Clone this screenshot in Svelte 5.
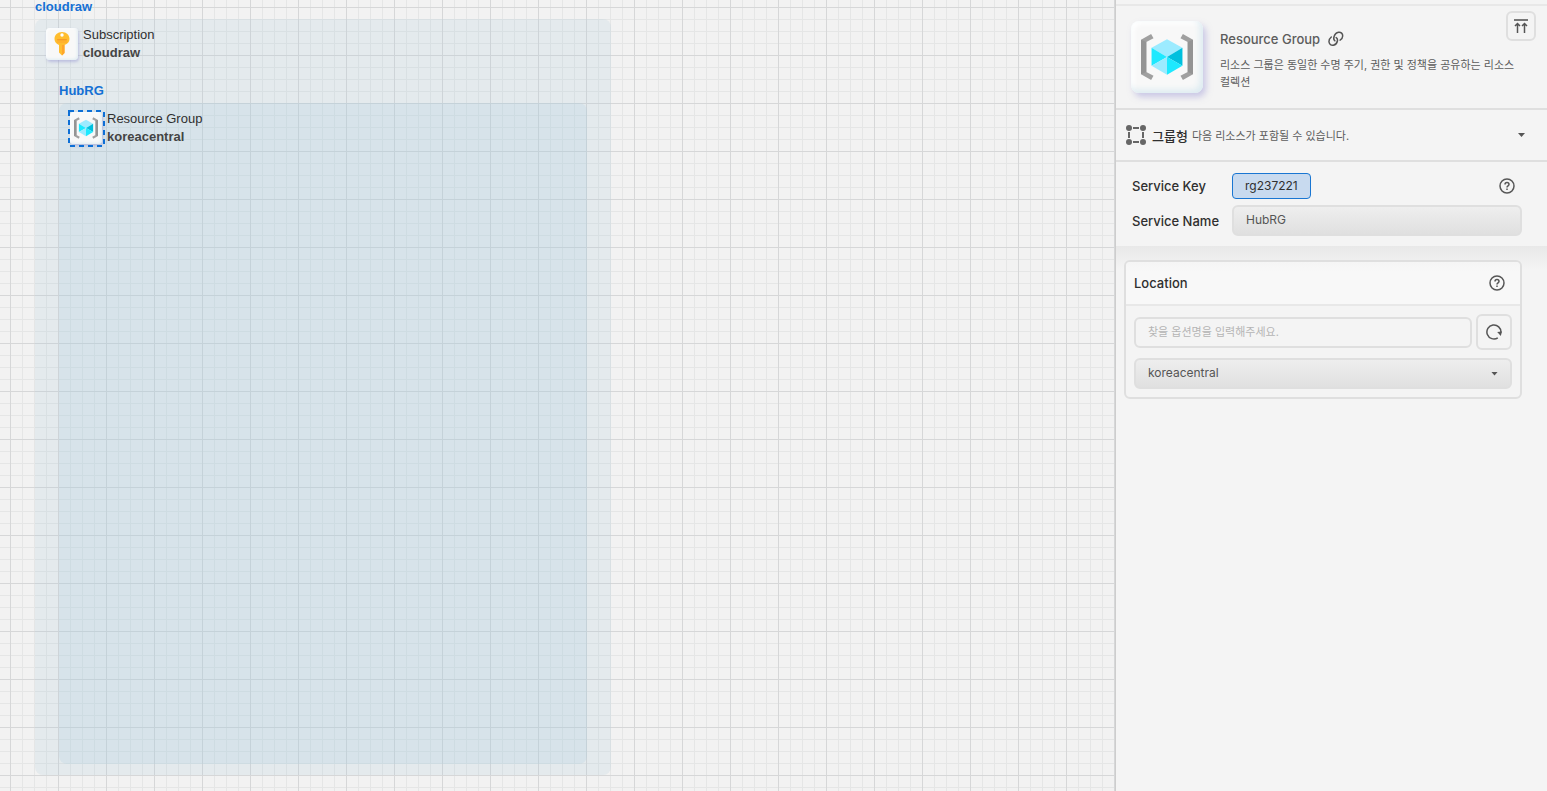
<script>
  let locationName = $state('koreacentral');
  let serviceName = $state('HubRG');
  let query = $state('');
</script>

{#snippet groupIcon(size)}
  <svg width={size} height={size} viewBox="0 0 54 50" aria-hidden="true">
    <path d="M10.5 1 13 5.5 5.5 9.5V40.5L13 44.500 10.500 49 0 43V7Z" fill="#a0a0a0" />
    <path d="M43.500 1 41 5.500 48.500 9.500V40.500L41 44.500 43.500 49 54 43V7Z" fill="#a0a0a0" />
    <path d="M0 7 5.500 9.500V40.500L0 43Z" fill="#949494" />
    <path d="M54 7 48.500 9.500V40.500L54 43Z" fill="#949494" />
    <path d="M27 6.500 43 15.500 27 25 11 15.500Z" fill="#9cebff" />
    <path d="M11 15.500 27 25 11 34Z" fill="#1de9ff" />
    <path d="M11 34 27 25V43.500Z" fill="#9cebff" />
    <path d="M43 15.500V34L27 25Z" fill="#00c0de" />
    <path d="M43 34 27 43.500V25Z" fill="#1de9ff" />
  </svg>
{/snippet}

{#snippet help()}
  <svg width="16" height="16" viewBox="0 0 16 16" fill="none" stroke="#575757" aria-hidden="true">
    <circle cx="8" cy="8" r="7" stroke-width="1.500" />
    <path d="M6 6.600C6 5.200 7 4.600 8 4.600S10 5.200 10 6.400C10 7.800 8 7.800 8 9.400" stroke-width="1.500" />
    <path d="M8 10.500V12" stroke-width="1.500" />
  </svg>
{/snippet}

<div class="app">
  <main class="canvas">
    <section class="group outer">
      <span class="title">cloudraw</span>
      <div class="node">
        <div class="tile">
          <svg width="18" height="26" viewBox="0 0 18 26" aria-hidden="true">
            <path d="M9 1C4.500 1 1.500 4.200 1.500 8c0 3 2 4.800 4.500 6v7.500L9 24.500l2.500-2.500V14c3-1.200 5-3 5-6C16.500 4.200 13.500 1 9 1Z" fill="#ffbd2e" />
            <path d="M9 14h2.500v8L9 24.500Z" fill="#ffa52b" />
            <rect x="4" y="8" width="10" height="1.500" rx=".7" fill="#f79a27" />
            <rect x="4" y="10.500" width="10" height="1" rx=".5" fill="#ffa52b" />
            <circle cx="9" cy="4" r="1.700" fill="#fff" />
          </svg>
        </div>
        <p>Subscription<b>cloudraw</b></p>
      </div>
    </section>
    <section class="group inner">
      <span class="title">HubRG</span>
      <div class="node">
        <div class="tile">
          {@render groupIcon(24)}
          <svg class="selection" width="37" height="37" aria-hidden="true">
            <rect x="1" y="1" width="35" height="35" fill="none" stroke="#0d6fd6" stroke-width="2" stroke-dasharray="5 4" />
          </svg>
        </div>
        <p>Resource Group<b>koreacentral</b></p>
      </div>
    </section>
  </main>

  <aside>
    <header>
      <div class="tile large">{@render groupIcon(52)}</div>
      <div class="about">
        <h1>
          Resource Group
          <a href="#resource-group" aria-label="Resource Group">
            <svg width="16" height="16" viewBox="0 0 16 16" fill="none" stroke="#555" stroke-width="1.500" stroke-linecap="round">
              <path d="M3.300 6C1.700 7.300 .8 9 1 11C1.300 13.300 3.200 14.700 5.400 14.200C7.500 13.700 9 12 9.400 10C9.700 8.400 9.300 7.200 8.200 6.600" />
              <path d="M6.900 9.800C5.800 9 5.500 7.500 6 5.700C6.700 3.300 8.400 1.500 10.600 1.200C13 .9 14.800 2.600 14.700 5C14.600 6.900 13.500 8.400 12.100 9.200" />
            </svg>
          </a>
        </h1>
        <p>리소스 그룹은 동일한 수명 주기, 권한 및 정책을 공유하는 리소스 컬렉션</p>
      </div>
      <button class="square top" aria-label="Top">
        <svg width="14" height="15" viewBox="0 0 14 15" fill="none" stroke="#555">
          <path d="M0 1H14" stroke-width="2" stroke="#777" />
          <path d="M3.500 14V4.500M1 7 3.500 4.500 6 7M10.500 14V4.500M8 7 10.500 4.500 13 7" stroke-width="1.500" />
        </svg>
      </button>
    </header>

    <button class="kind">
      <svg width="20" height="20" viewBox="0 0 20 20" fill="#666" stroke="#666" stroke-width="2" aria-hidden="true">
        <path d="M7 3H13M7 17H13M3 7V13M17 7V13" />
        <g stroke="none"><circle cx="3" cy="3" r="3" /><circle cx="17" cy="3" r="3" /><circle cx="3" cy="17" r="3" /><circle cx="17" cy="17" r="3" /></g>
      </svg>
      <strong>그룹형</strong>
      <span>다음 리소스가 포함될 수 있습니다.</span>
      <i class="caret"></i>
    </button>

    <div class="fields">
      <div class="row">
        <span class="label">Service Key</span>
        <span class="key">rg237221</span>
        <button class="help" aria-label="Service Key">{@render help()}</button>
      </div>
      <div class="row">
        <label class="label" for="service-name">Service Name</label>
        <input id="service-name" class="filled" bind:value={serviceName} />
      </div>
    </div>

    <div class="options">
      <section class="card">
        <div class="card-head">
          <label for="location">Location</label>
          <button class="help" aria-label="Location">{@render help()}</button>
        </div>
        <div class="card-body">
          <div class="search">
            <input aria-label="Location" placeholder="찾을 옵션명을 입력해주세요." bind:value={query} />
            <button class="square reload" aria-label="Reload">
              <svg width="18" height="16" viewBox="0 0 18 16" fill="none" stroke="#555" stroke-width="1.500">
                <path d="M12.800 13.800A7 7 0 1 1 15.900 8.500" />
                <path d="M12.200 8 17 7.400 15.800 12Z" fill="#555" stroke="none" />
              </svg>
            </button>
          </div>
          <div class="select">
            <select id="location" class="filled" bind:value={locationName}>
              <option value="koreacentral">koreacentral</option>
            </select>
            <i class="caret"></i>
          </div>
        </div>
      </section>
    </div>
  </aside>
</div>

<style>
  :global(body) { margin: 0; }
  * { box-sizing: border-box; }
  p, h1 { margin: 0; }
  .app {
    display: flex;
    min-height: 100vh;
    font-family: Inter, 'Noto Sans CJK KR', sans-serif;
    color: #2f2f2f;
    background: #f4f4f4;
  }
  button, input, select { font: inherit; color: inherit; }
  button { padding: 0; border: 0; background: none; }
  svg { display: block; flex: none; }

  .canvas {
    position: relative;
    flex: 1;
    min-width: 0;
    overflow: hidden;
    background-color: #f2f2f2;
    background-image:
      linear-gradient(to right, #d6d7d8 1px, transparent 1px),
      linear-gradient(to bottom, #d6d7d8 1px, transparent 1px),
      linear-gradient(to right, #e5e6e6 1px, transparent 1px),
      linear-gradient(to bottom, #e5e6e6 1px, transparent 1px);
    background-size: 48px 48px, 48px 48px, 12px 12px, 12px 12px;
    background-position: 10px 7px;
    font-family: 'Liberation Sans', Arial, sans-serif;
  }
  .group { position: absolute; border-radius: 8px; }
  .outer { left: 35px; top: 19px; width: 576px; height: 756px; background: rgba(178, 204, 220, 0.220); }
  .inner { left: 59px; top: 103px; width: 528px; height: 661px; background: rgba(168, 204, 221, 0.220); }
  .title { position: absolute; left: 0; bottom: 100%; margin-bottom: 5px; font-size: 13px; line-height: 14px; font-weight: 700; color: #1570d4; }
  .node { display: flex; align-items: center; gap: 5px; padding: 7px 11px; font-size: 13px; line-height: 18px; }
  .node b { display: block; color: #444; }
  .tile {
    position: relative;
    display: flex;
    flex: none;
    align-items: center;
    justify-content: center;
    width: 32px;
    height: 32px;
    border-radius: 4px;
    background: #f8f8f8;
    box-shadow: 1px 2px 3px rgba(150, 150, 210, 0.500), inset -1px -1px 3px #e0edf2, inset 1px 1px 2px #fff;
  }
  .selection { position: absolute; left: -2px; top: -2px; }

  aside {
    flex: none;
    width: 432px;
    padding-top: 4px;
    border-left: 1px solid #cdcdcd;
    background: #f4f4f4;
  }
  header {
    display: flex;
    align-items: flex-start;
    gap: 17px;
    padding: 15px 11px 15px 15px;
    border-top: 2px solid #e8e8e8;
    border-bottom: 2px solid #dfdfdf;
    position: relative;
  }
  .large {
    width: 72px;
    height: 72px;
    border-radius: 8px;
    box-shadow: 3px 4px 6px rgba(160, 155, 215, 0.500), inset -3px -3px 6px #dcebf1, inset 3px 3px 5px #fff;
  }
  .about { flex: 1; padding-top: 8px; }
  h1 { display: flex; align-items: center; gap: 8px; font-size: 13px; line-height: 20px; font-weight: 500; color: #5c5c5c; }
  .about p { max-width: 304px; margin-top: 8px; font-size: 11px; line-height: 17px; color: #5c5c5c; }
  .square { display: flex; align-items: center; justify-content: center; flex: none; border: 2px solid #dfdfdf; border-radius: 6px; }
  .top { position: absolute; top: 5px; right: 11px; width: 30px; height: 30px; }

  .kind {
    display: flex;
    align-items: center;
    width: 100%;
    height: 52px;
    padding: 0 22px 0 10px;
    border-bottom: 2px solid #dfdfdf;
    font-size: 11px;
    color: #5c5c5c;
    text-align: left;
  }
  .kind strong { margin: 0 4px 0 6px; font-size: 13px; font-weight: 500; color: #2f2f2f; }
  .caret { width: 7px; height: 4px; margin-left: auto; background: #555; clip-path: polygon(0 0, 100% 0, 50% 100%); }

  .fields { display: flex; flex-direction: column; gap: 6px; padding: 10px 25px 10px 16px; }
  .row { display: flex; align-items: center; min-height: 27px; }
  .label { flex: none; width: 100px; font-size: 13px; font-weight: 500; }
  .key { padding: 0 12px; border: 1px solid #1976d2; border-radius: 4px; background: #c8daef; font-size: 12px; line-height: 24px; }
  .help { margin-left: auto; margin-right: 7px; }
  input, select {
    flex: 1;
    width: 100%;
    min-width: 0;
    height: 31px;
    margin: 0;
    padding: 0 12px 2px;
    border: 2px solid #dfdfdf;
    border-radius: 6px;
    background: #f4f4f4;
    font-size: 12px;
    color: #555;
    appearance: none;
  }
  input::placeholder { color: #b4b4b4; font-size: 11px; opacity: 1; }
  .filled { background: linear-gradient(#eee, #e0e0e0); }

  .options { padding: 14px 25px 14px 8px; background: linear-gradient(#e8e8e8, #f4f4f4 24px); }
  .card { border: 2px solid #dfdfdf; border-radius: 6px; }
  .card-head {
    display: flex;
    align-items: center;
    height: 44px;
    padding: 0 8px;
    border-bottom: 2px solid #e8e8e8;
    border-radius: 4px 4px 0 0;
    background: linear-gradient(#f5f5f5, #f8f8f8 10px);
    font-size: 13px;
    font-weight: 500;
  }
  .card-body { display: flex; flex-direction: column; gap: 8px; padding: 8px; }
  .search { display: flex; align-items: center; gap: 4px; }
  .reload { width: 36px; height: 36px; }
  .select { display: grid; align-items: center; }
  .select select, .select .caret { grid-area: 1 / 1; }
  .select .caret { justify-self: end; margin-right: 14px; pointer-events: none; }
</style>
